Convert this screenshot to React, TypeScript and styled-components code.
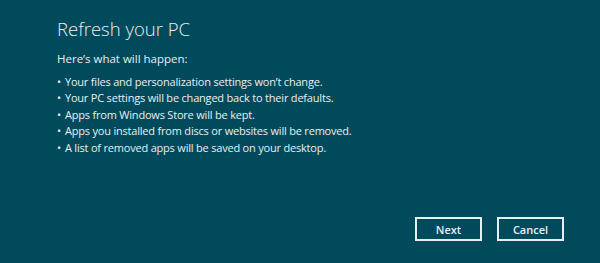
import React from "react";
import styled, { createGlobalStyle } from "styled-components";

const Global = createGlobalStyle`
  html, body { margin: 0; padding: 0; background: #014a5b; }
  body { font-family: "Open Sans", "Noto Sans", sans-serif; }
`;

const Screen = styled.div`
  box-sizing: border-box;
  width: 600px;
  height: 263px;
  background: #014a5b;
  color: #e8eff1;
  display: flex;
  flex-direction: column;
  padding: 19px 36px 22px 57px;
`;

const Title = styled.h1`
  margin: 0;
  font-size: 18.5px;
  font-weight: 300;
  line-height: 20px;
`;

const Intro = styled.p`
  margin: 13px 0 0;
  font-size: 11.5px;
  line-height: 14px;
`;

const List = styled.ul`
  list-style: none;
  margin: 8px 0 0;
  padding: 0;
  display: flex;
  flex-direction: column;
`;

const Item = styled.li`
  font-size: 11px;
  line-height: 16.4px;
  letter-spacing: -0.2px;
  display: flex;
  gap: 4px;
  &::before {
    content: "•";
  }
`;

const Actions = styled.div`
  margin-top: auto;
  display: flex;
  justify-content: flex-end;
  gap: 15px;
`;

const Button = styled.button`
  box-sizing: border-box;
  width: 67px;
  height: 24px;
  border: 2px solid #e8eff1;
  background: transparent;
  color: #e8eff1;
  font-family: "Open Sans", "Noto Sans", sans-serif;
  font-size: 11px;
  font-weight: 600;
  padding: 0;
`;

const items = [
  "Your files and personalization settings won’t change.",
  "Your PC settings will be changed back to their defaults.",
  "Apps from Windows Store will be kept.",
  "Apps you installed from discs or websites will be removed.",
  "A list of removed apps will be saved on your desktop.",
];

export default function App() {
  return (
    <>
      <Global />
      <Screen>
        <Title>Refresh your PC</Title>
        <Intro>Here’s what will happen:</Intro>
        <List>
          {items.map((t) => (
            <Item key={t}>{t}</Item>
          ))}
        </List>
        <Actions>
          <Button>Next</Button>
          <Button>Cancel</Button>
        </Actions>
      </Screen>
    </>
  );
}
